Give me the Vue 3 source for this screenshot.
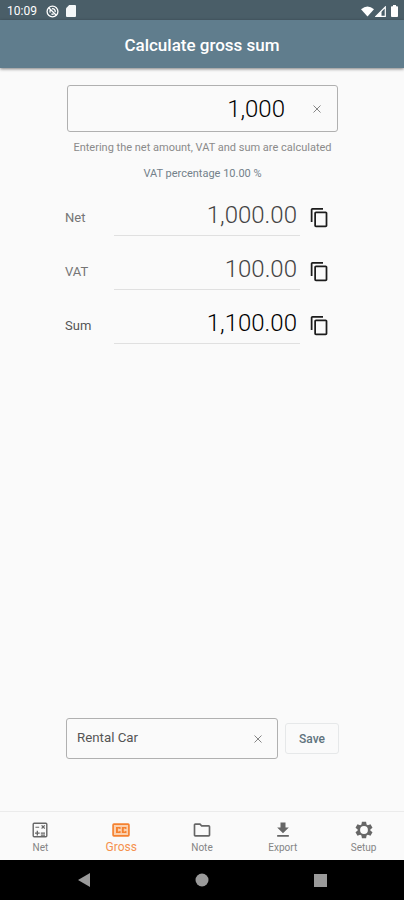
<template>
  <div class="screen">
    <div class="status">
      <span class="time">10:09</span>
      <svg class="dnd" viewBox="0 0 24 24" width="13" height="13" fill="none" stroke="#fff" stroke-width="2.4">
        <circle cx="12" cy="12" r="10" />
        <path d="M5 5l14 14M8 14a5 5 0 0 1 0-5M11 7a5 5 0 0 1 6 6M10 16a5 5 0 0 0 4 1" />
      </svg>
      <svg class="sd" viewBox="0 0 10 12" width="10" height="12" fill="#f4f7f8">
        <path d="M3.2 0H9a1 1 0 0 1 1 1v10a1 1 0 0 1-1 1H1a1 1 0 0 1-1-1V3.2z" />
      </svg>
      <span class="space"></span>
      <svg viewBox="0 0 14 11" width="13" height="11" fill="#fff">
        <path d="M0 3Q7-3 14 3L7 11z" />
      </svg>
      <svg class="signal" viewBox="0 0 11 11" width="11" height="11">
        <path d="M10.3 1v9.3H1z" fill="none" stroke="#fff" stroke-width="1.2" />
        <path d="M6.5 5v5.500H1z" fill="#fff" />
      </svg>
      <svg class="battery" viewBox="0 0 7 12" width="7" height="12" fill="#fff">
        <path d="M2 0h3v1.3h1.2q.8 0 .8.8v9q0 .9-.8.9H.8q-.8 0-.8-.9v-9q0-.8.8-.8H2z" />
      </svg>
    </div>

    <header class="bar">Calculate gross sum</header>

    <main class="content">
      <div class="amount">
        <input v-model="amount" class="amount-input" />
        <button class="clear" @click="amount = ''">
          <svg viewBox="0 0 8 8" width="8" height="8"><path d="M.5.5l7 7M7.5.5l-7 7" /></svg>
        </button>
      </div>
      <p class="hint">Entering the net amount, VAT and sum are calculated</p>
      <p class="percent">VAT percentage 10.00 %</p>

      <div v-for="row in rows" :key="row.label" class="row" :class="{ strong: row.strong }">
        <span class="label">{{ row.label }}</span>
        <span class="value">{{ row.value }}</span>
        <svg class="copy" viewBox="0 0 24 24" width="21" height="21" fill="#1c1c1c">
          <path d="M16 1H4c-1.100 0-2 .9-2 2v14h2V3h12V1zm3 4H8c-1.100 0-2 .9-2 2v14c0 1.100.9 2 2 2h11c1.100 0 2-.9 2-2V7c0-1.100-.9-2-2-2zm0 16H8V7h11v14z" />
        </svg>
      </div>

      <div class="save-row">
        <div class="note">
          <input v-model="note" class="note-input" />
          <button class="clear" @click="note = ''">
            <svg viewBox="0 0 8 8" width="8" height="8"><path d="M.5.5l7 7M7.5.5l-7 7" /></svg>
          </button>
        </div>
        <button class="save">Save</button>
      </div>
    </main>

    <nav class="tabs">
      <button
        v-for="tab in tabs"
        :key="tab.label"
        class="tab"
        :class="{ active: tab.label === current }"
        @click="current = tab.label"
      >
        <svg viewBox="0 0 24 24" width="20" height="20" fill="currentColor" fill-rule="evenodd"><path :d="tab.icon" /></svg>
        <span>{{ tab.label }}</span>
      </button>
    </nav>

    <div class="system">
      <svg viewBox="0 0 12 14" width="12" height="14"><path d="M12 0v14L0 7z" /></svg>
      <svg viewBox="0 0 14 14" width="14" height="14"><circle cx="7" cy="7" r="6.500" /></svg>
      <svg viewBox="0 0 13 13" width="13" height="13"><path d="M0 0h13v13H0z" /></svg>
    </div>
  </div>
</template>

<script setup>
import { ref } from 'vue';

const amount = ref('1,000');
const note = ref('Rental Car');
const current = ref('Gross');

const rows = [
  { label: 'Net', value: '1,000.00' },
  { label: 'VAT', value: '100.00' },
  { label: 'Sum', value: '1,100.00', strong: true },
];

const tabs = [
  {
    label: 'Net',
    icon: 'M5 3h14a2 2 0 0 1 2 2v14a2 2 0 0 1-2 2H5a2 2 0 0 1-2-2V5a2 2 0 0 1 2-2zM4.700 4.700v14.600h14.600V4.700zM6.500 8h4.500v1.400H6.500zM13 15h5v1.400h-5zM13 17.400h5v1.400h-5zM8 13h1.600v2h2v1.600h-2v2H8v-2H6V15h2zM13.400 6.900l1-1 1.400 1.400 1.400-1.400 1 1-1.400 1.400 1.400 1.400-1 1-1.400-1.400-1.400 1.400-1-1 1.400-1.400z',
  },
  {
    label: 'Gross',
    icon: 'M3.500 4h17A2 2 0 0 1 22.500 6v12a2 2 0 0 1-2 2h-17a2 2 0 0 1-2-2V6a2 2 0 0 1 2-2zM3.500 6v12h17V6zM6 8.500h5.500v2.300H10v-.5H8.300v3.400H10v-.5h1.500v2.300H6zM13 8.500h5.500v2.300H17v-.5h-1.700v3.400H17v-.5h1.500v2.300H13z',
  },
  {
    label: 'Note',
    icon: 'M9.200 6l2 2H20v10H4V6h5.200M10 4H4c-1.100 0-2 .9-2 2v12c0 1.100.9 2 2 2h16c1.100 0 2-.9 2-2V8c0-1.100-.9-2-2-2h-8z',
  },
  { label: 'Export', icon: 'M19 9h-4V3H9v6H5l7 7zM5 18v2h14v-2z' },
  {
    label: 'Setup',
    icon: 'M9.500 2h5l.6 3.300 1.500.9 3.200-1.100 2.400 4.200-2.600 2.200v1l2.600 2.200-2.400 4.200-3.200-1.100-1.500.9-.6 3.300h-5l-.6-3.300-1.500-.9-3.200 1.100-2.400-4.200 2.600-2.200v-1L1.800 9.300l2.400-4.200 3.200 1.100 1.500-.9zM12 7.300a4.700 4.700 0 1 0 0 9.400 4.700 4.700 0 0 0 0-9.400z',
  },
];
</script>

<style>
html, body { margin: 0; background: #fafafa; }
</style>

<style scoped>
.screen { width: 404px; height: 900px; display: flex; flex-direction: column; background: #fafafa; font-family: Roboto, "Liberation Sans", sans-serif; color: #222; overflow: hidden; }
button, input { font-family: inherit; border: none; background: none; padding: 0; margin: 0; outline: none; }
svg { display: block; flex-shrink: 0; }
p { margin: 0; }

.status { height: 20px; flex-shrink: 0; box-sizing: border-box; padding: 2px 6px 0 7px; display: flex; align-items: center; background: #4a5e68; color: #fff; }
.time { width: 39px; font-size: 12px; }
.sd { margin-left: 7px; }
.space { flex: 1; }
.signal { margin-left: 1px; }
.battery { margin-left: 5px; }

.bar { position: relative; height: 48px; flex-shrink: 0; display: flex; align-items: center; justify-content: center; padding-top: 2px; box-sizing: border-box; background: #607d8d; color: #fff; font-size: 17px; font-weight: 500; box-shadow: 0 1px 3px rgba(0, 0, 0, .5); }

.content { flex: 1; display: flex; flex-direction: column; padding: 17px 64px 0 65px; }
.amount { height: 47px; box-sizing: border-box; margin: 0 2px; display: flex; align-items: center; border: 1px solid #b0b0b0; border-radius: 3px; }
.amount-input { flex: 1; min-width: 0; text-align: right; font-size: 24px; font-weight: 300; color: #000; }
.amount .clear { margin: 0 16px 0 28px; }
.clear { cursor: pointer; }
.clear path { fill: none; stroke: #858585; stroke-width: 1; }
.hint { margin-top: 9px; line-height: 14px; font-size: 11px; text-align: center; color: #8a8a8a; white-space: nowrap; }
.percent { margin-top: 12px; line-height: 14px; font-size: 11px; text-align: center; color: #73818a; }

.row { height: 54px; display: flex; align-items: center; }
.percent + .row { margin-top: 9px; }
.label { width: 49px; font-size: 13px; color: #757575; }
.value { width: 186px; height: 41px; box-sizing: border-box; margin-bottom: 4px; padding-right: 3px; border-bottom: 1px solid #e0e0e0; line-height: 40px; text-align: right; font-size: 24px; font-weight: 300; color: #444; }
.copy { margin-left: 9px; }
.strong .label { color: #555; }
.strong .value { color: #000; }

.save-row { margin: auto 0 52px 1px; display: flex; align-items: center; }
.note { width: 212px; height: 41px; box-sizing: border-box; display: flex; align-items: center; border: 1px solid #b0b0b0; border-radius: 3px; }
.note-input { flex: 1; min-width: 0; padding-left: 10px; padding-bottom: 3px; font-size: 13.3px; color: #555; }
.note .clear { margin-right: 15px; }
.save { width: 54px; height: 31px; margin-left: 7px; border: 1px solid #e6e8e9; border-radius: 3px; font-size: 12px; font-weight: 500; color: #60737d; }

.tabs { height: 49px; flex-shrink: 0; box-sizing: border-box; display: flex; border-top: 1px solid #ebebeb; }
.tab { flex: 1; display: flex; flex-direction: column; align-items: center; padding-top: 8px; color: #666; }
.tab span { margin-top: 1px; font-size: 10px; line-height: 14px; color: #858585; }
.tab.active { color: #f5812f; }
.tab.active svg { background: linear-gradient(#fbd0ae, #fbd0ae) center / 16px 12px no-repeat; }
.tab.active span { margin-top: 0; font-size: 12px; color: #f5914e; }

.system { height: 40px; flex-shrink: 0; box-sizing: border-box; display: flex; align-items: center; justify-content: space-between; padding: 0 77px 0 78px; background: #000; }
.system svg { fill: #9a9a9a; }
</style>
